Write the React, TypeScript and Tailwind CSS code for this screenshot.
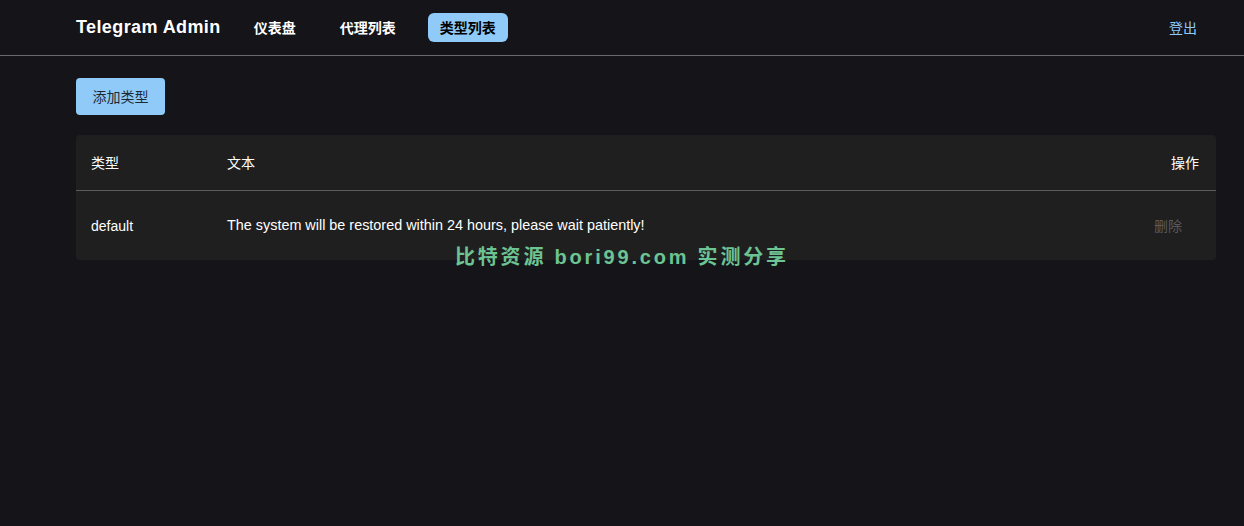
const rows = [
  {
    type: "default",
    text: "The system will be restored within 24 hours, please wait patiently!",
  },
];

const navItems = [
  { label: "仪表盘", active: false },
  { label: "代理列表", active: false },
  { label: "类型列表", active: true },
];

const App: React.FC = () => {
  return (
    <div
      className="relative min-h-[526px] bg-[#141419] text-white text-sm"
      style={{ fontFamily: '"Liberation Sans", "Noto Sans CJK SC", sans-serif' }}
    >
      <header className="h-[56px] border-b border-[#6b6b6e]">
        <div className="ml-[76px] mr-[28px] h-full flex items-center">
          <div className="text-[18px] font-bold tracking-[0.4px] mr-[21px]">Telegram Admin</div>
          <nav className="flex items-center gap-5">
            {navItems.map((item) => (
              <button
                key={item.label}
                className={
                  item.active
                    ? "h-[29px] px-3 rounded-md bg-[#90caf9] text-black font-bold"
                    : "h-[29px] px-3 rounded-md text-white font-bold"
                }
              >
                {item.label}
              </button>
            ))}
          </nav>
          <button className="ml-auto mr-[19px] text-[#90caf9]">登出</button>
        </div>
      </header>

      <main className="ml-[76px] mr-[28px] pt-[22px]">
        <button className="h-[37px] w-[89px] rounded bg-[#90caf9] text-[#1d2a36]">添加类型</button>

        <div className="mt-5 bg-[#1f1f1f] rounded">
          <div className="grid grid-cols-[151px_1fr_auto] items-center h-[56px] border-b border-[#5c5c5c]">
            <div className="pl-[15px]">类型</div>
            <div>文本</div>
            <div className="pr-[17px]">操作</div>
          </div>
          {rows.map((row) => (
            <div key={row.type} className="grid grid-cols-[151px_1fr_auto] items-center h-[69px]">
              <div className="pl-[15px]">{row.type}</div>
              <div className="text-[14.4px]">{row.text}</div>
              <button className="mr-[34px] text-[#5a5a5a]">删除</button>
            </div>
          ))}
        </div>
      </main>

      <div className="absolute left-[455px] top-[243px] text-[20px] font-semibold tracking-[2.8px] text-[#6cc393]">
        比特资源 bori99.com 实测分享
      </div>
    </div>
  );
};

export default App;
